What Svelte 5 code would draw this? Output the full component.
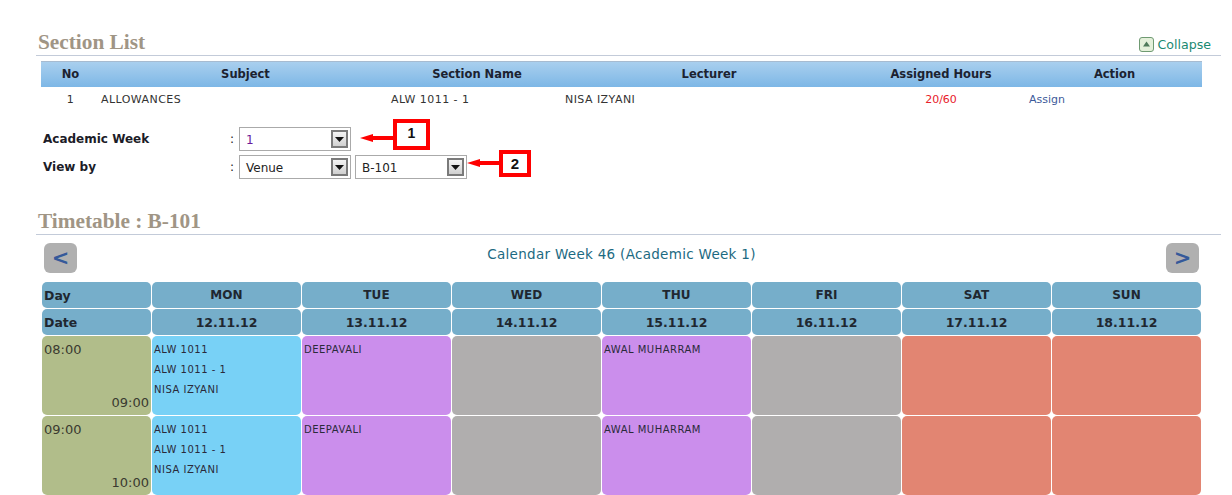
<script>
  const heads = ['MON','TUE','WED','THU','FRI','SAT','SUN'];
  const dates = ['12.11.12','13.11.12','14.11.12','15.11.12','16.11.12','17.11.12','18.11.12'];
  const slots = [['08:00','09:00'],['09:00','10:00']];
  const days = [
    {c:'blue', t:['ALW 1011','ALW 1011 - 1','NISA IZYANI']},
    {c:'purple', t:['DEEPAVALI']},
    {c:'gray', t:[]},
    {c:'purple', t:['AWAL MUHARRAM']},
    {c:'gray', t:[]},
    {c:'salmon', t:[]},
    {c:'salmon', t:[]}
  ];
</script>

<main class="page">
  <div class="heading first">
    <h2>Section List</h2>
    <span class="collapse">
      <svg width="15" height="15" viewBox="0 0 15 15"><rect x="0.5" y="0.5" width="14" height="14" rx="2.5" fill="#e4f0da" stroke="#6f9a72"/><path d="M7.5 4.5 L11 9.5 H4 Z" fill="#4f7a5a"/></svg>
      Collapse
    </span>
  </div>

  <div class="table">
    <div class="thead">
      <span>No</span><span>Subject</span><span>Section Name</span><span>Lecturer</span><span>Assigned Hours</span><span>Action</span>
    </div>
    <div class="trow">
      <span class="mid">1</span><span class="p1">ALLOWANCES</span><span>ALW 1011 - 1</span><span class="p2">NISA IZYANI</span><span class="mid hot">20/60</span><span class="p2 link">Assign</span>
    </div>
  </div>

  <div class="form">
    <div class="frow">
      <b class="lab">Academic Week</b><span class="colon">:</span>
      <div class="sel violet"><span>1</span><i class="btn"><svg width="9" height="5" viewBox="0 0 9 5"><path d="M0 0H9L4.5 5Z" fill="#111"/></svg></i></div>
    </div>
    <div class="frow">
      <b class="lab">View by</b><span class="colon">:</span>
      <div class="sel"><span>Venue</span><i class="btn"><svg width="9" height="5" viewBox="0 0 9 5"><path d="M0 0H9L4.5 5Z" fill="#111"/></svg></i></div>
      <div class="sel"><span>B-101</span><i class="btn"><svg width="9" height="5" viewBox="0 0 9 5"><path d="M0 0H9L4.5 5Z" fill="#111"/></svg></i></div>
    </div>
    <div class="note n1">1</div>
    <svg class="arrow a1" width="34" height="10" viewBox="0 0 34 10"><path d="M0 5 L13 1 V3 H34 V7 H13 V9 Z" fill="#f00"/></svg>
    <div class="note n2">2</div>
    <svg class="arrow a2" width="33" height="10" viewBox="0 0 33 10"><path d="M0 5 L13 1 V3 H33 V7 H13 V9 Z" fill="#f00"/></svg>
  </div>

  <div class="heading second"><h2>Timetable : B-101</h2></div>

  <div class="nav">
    <button class="navbtn">&lt;</button>
    <span class="navtitle">Calendar Week 46 (Academic Week 1)</span>
    <button class="navbtn">&gt;</button>
  </div>

  <div class="grid">
    <div class="cell hd first-col">Day</div>
    {#each heads as h}<div class="cell hd">{h}</div>{/each}
    <div class="cell hd first-col">Date</div>
    {#each dates as d}<div class="cell hd date">{d}</div>{/each}
    {#each slots as s}
      <div class="cell time"><span>{s[0]}</span><span class="end">{s[1]}</span></div>
      {#each days as d}
        <div class="cell slot {d.c}">{#each d.t as line}<div>{line}</div>{/each}</div>
      {/each}
    {/each}
  </div>
</main>

<style>
  :global(body) { margin: 0; background: #fff; }
  .page { width: 1232px; height: 495px; overflow: hidden; font-family: "DejaVu Sans", Verdana, sans-serif; color: #222; box-sizing: border-box; padding-left: 36px; }
  .heading { width: 1185px; border-bottom: 1px solid #c3cbd9; display: flex; justify-content: space-between; align-items: flex-end; box-sizing: border-box; }
  .first { height: 56px; padding: 0 10px 1px 2px; }
  .second { height: 24px; margin-top: 5px; padding: 0 0 1px 2px; }
  h2 { margin: 0; font: bold 21.3px/24px "Liberation Serif", Georgia, serif; color: #a09585; }
  .collapse { display: flex; align-items: center; gap: 3px; font-size: 12.6px; color: #1a8a72; margin-bottom: 2px; }
  .table { margin: 5px 0 0 5px; width: 1161px; }
  .thead, .trow { display: grid; grid-template-columns: 59px 291px 172px 292px 172px 175px; align-items: center; }
  .thead { height: 26px; padding-bottom: 2px; background: linear-gradient(#a9cfee, #7db7e6); border-top: 1px solid #a7bbd0; box-sizing: border-box; font-size: 11.5px; font-weight: bold; color: #1c2230; text-align: center; }
  .trow { height: 24px; font-size: 11px; letter-spacing: 0.45px; color: #333; }
  .mid { text-align: center; }
  .p1 { padding-left: 1px; }
  .p2 { padding-left: 2px; }
  .hot { color: #e8202a; letter-spacing: 0; }
  .link { color: #3d5a9a; letter-spacing: 0; }
  .form { position: relative; padding-top: 16px; height: 95px; box-sizing: border-box; }
  .frow { display: flex; align-items: center; height: 24px; margin-bottom: 4px; padding-left: 7px; }
  .lab { width: 187px; font-size: 12px; color: #1c1c28; }
  .colon { width: 9px; font-size: 12px; }
  .sel { width: 112px; height: 24px; margin-right: 4px; box-sizing: border-box; border: 1px solid #aaa; display: flex; align-items: center; justify-content: space-between; padding: 0 2px 0 6px; font-size: 12px; color: #222; background: #fff; }
  .sel span { padding-top: 2px; }
  .violet { color: #6a1a9a; }
  .btn { width: 17px; height: 18px; box-sizing: border-box; border: 2px solid #7a7a7a; background: linear-gradient(#f4f4f4, #d0d0d0); display: flex; align-items: center; justify-content: center; }
  .note { position: absolute; background: #fff; border: 4px solid #f00; box-sizing: border-box; font: bold 14px "Liberation Sans", Arial, sans-serif; color: #111; display: flex; align-items: center; justify-content: center; }
  .n1 { left: 357px; top: 8px; width: 37px; height: 31px; padding-bottom: 4px; }
  .n2 { left: 463px; top: 39px; width: 32px; height: 27px; font-size: 15px; }
  .arrow { position: absolute; }
  .a1 { left: 324px; top: 22px; }
  .a2 { left: 431px; top: 47px; }
  .nav { display: flex; align-items: center; justify-content: space-between; width: 1155px; margin: 8px 0 0 8px; height: 30px; }
  .navbtn { width: 33px; height: 30px; padding: 0; border: 0; border-radius: 6px; background: #b0b0b0; color: #35599a; font: bold 21px "DejaVu Sans", sans-serif; display: flex; align-items: center; justify-content: center; }
  .navtitle { font-size: 13.5px; color: #1c6a82; margin-top: -8px; letter-spacing: 0.3px; }
  .grid { display: grid; grid-template-columns: 109px repeat(7, 149px); grid-template-rows: 26px 26px 79px 79px; gap: 1px; margin: 9px 0 0 6px; width: 1160px; }
  .cell { border-radius: 5px; box-sizing: border-box; }
  .hd { background: #76aeca; display: flex; align-items: center; justify-content: center; font-size: 12px; letter-spacing: 0.1px; font-weight: bold; color: #1f2730; }
  .date { font-size: 12.5px; letter-spacing: 0; }
  .first-col { justify-content: flex-start; padding-left: 2px; font-size: 12.5px; letter-spacing: 0; }
  .time { background: #b1bd8a; font-size: 13px; color: #3a3a30; padding: 6px 2px 5px 2px; display: flex; flex-direction: column; justify-content: space-between; }
  .end { align-self: flex-end; }
  .slot { padding: 7px 2px; font-size: 10px; letter-spacing: 0.5px; line-height: 20px; color: #2a2a3a; }
  .slot div { margin-top: -3px; margin-bottom: 3px; }
  .blue { background: #78d1f6; }
  .purple { background: #cb8eec; }
  .gray { background: #b0aeae; }
  .salmon { background: #e28572; }
</style>
